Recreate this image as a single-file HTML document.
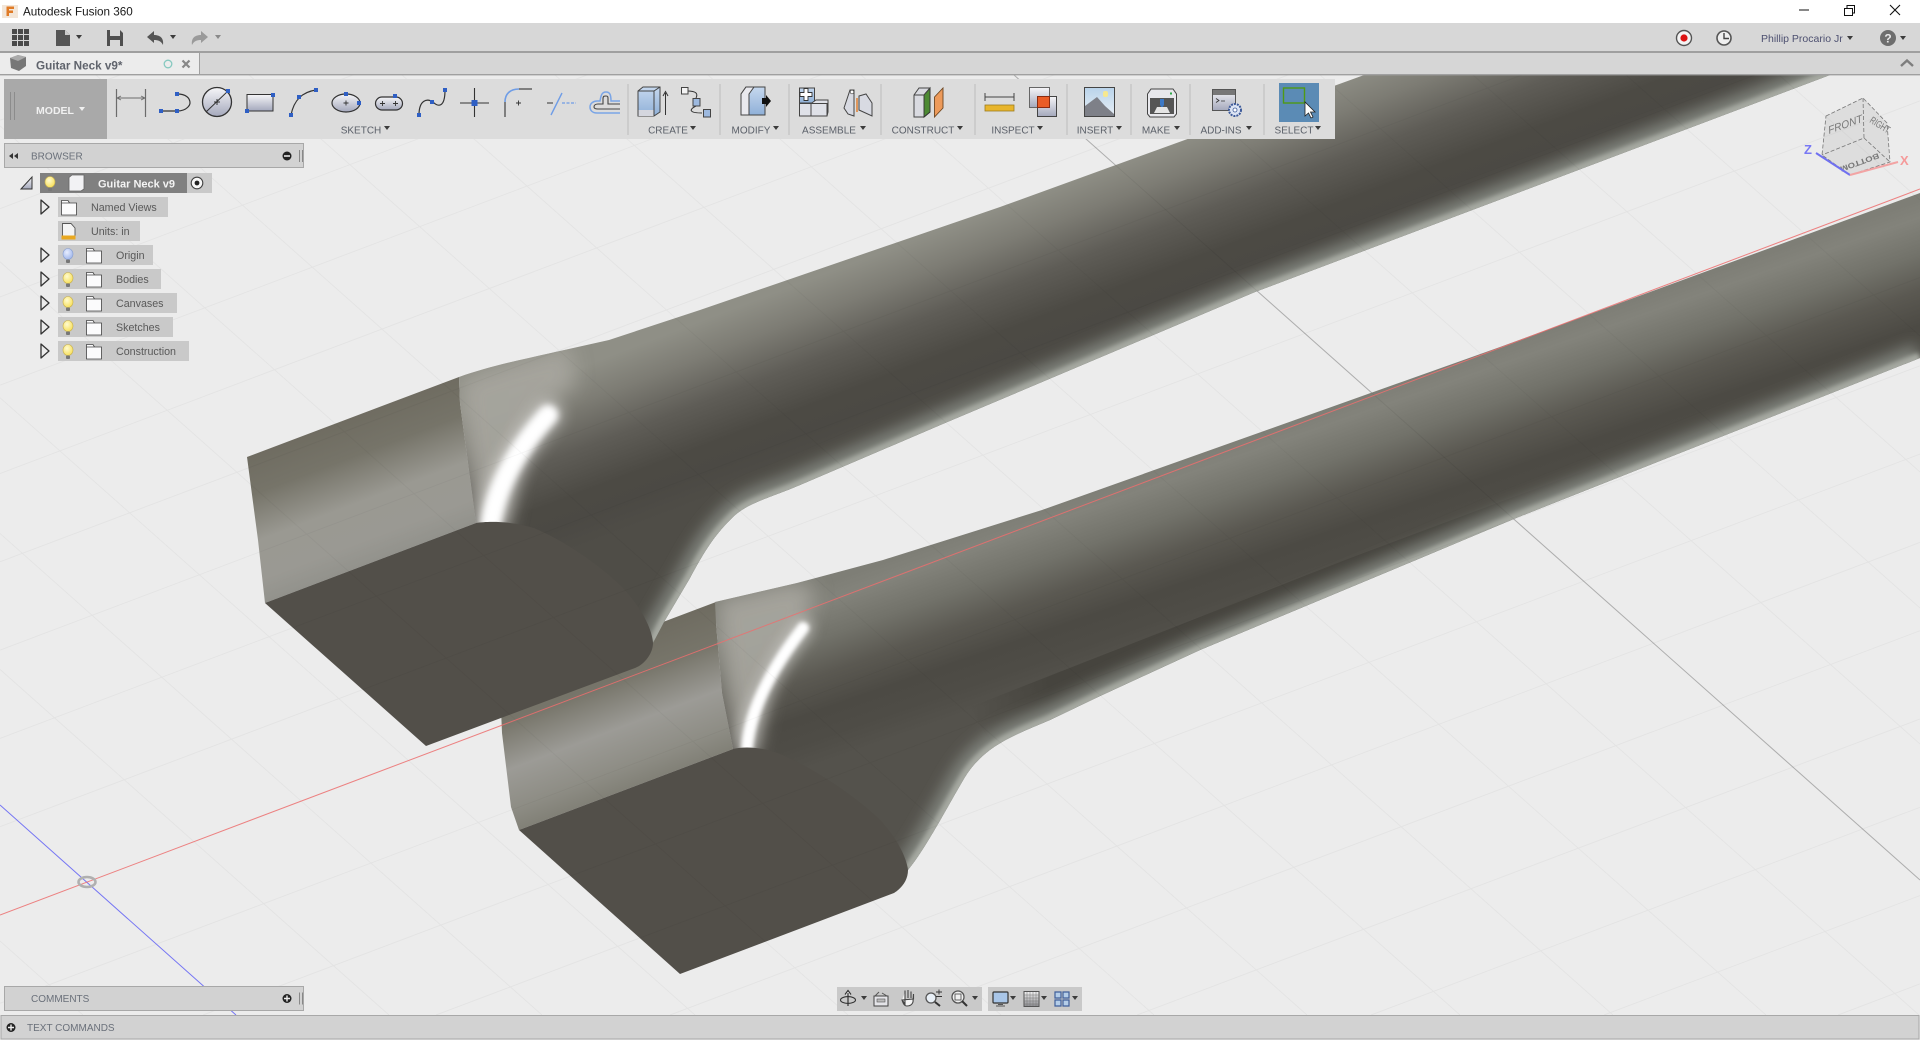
<!DOCTYPE html>
<html><head><meta charset="utf-8"><title>Autodesk Fusion 360</title>
<style>
html,body{margin:0;padding:0;width:1920px;height:1040px;overflow:hidden;background:#ececec}
svg{display:block}
text{font-family:"Liberation Sans",sans-serif}
.lb{font-size:10px;fill:#5a5f68;text-anchor:middle}
.tr{font-size:10.7px;fill:#595959}
.pn{font-size:10px;fill:#6a707a}
</style></head><body>
<svg width="1920" height="1040" viewBox="0 0 1920 1040" xmlns="http://www.w3.org/2000/svg">
<defs>
<filter id="b2" filterUnits="userSpaceOnUse" x="0" y="0" width="1920" height="1040"><feGaussianBlur stdDeviation="2"/></filter>
<filter id="b3" filterUnits="userSpaceOnUse" x="0" y="0" width="1920" height="1040"><feGaussianBlur stdDeviation="3.5"/></filter>
<filter id="b6" filterUnits="userSpaceOnUse" x="0" y="0" width="1920" height="1040"><feGaussianBlur stdDeviation="6"/></filter>
<filter id="b7" filterUnits="userSpaceOnUse" x="0" y="0" width="1920" height="1040"><feGaussianBlur stdDeviation="7"/></filter>
<filter id="b10" filterUnits="userSpaceOnUse" x="0" y="0" width="1920" height="1040"><feGaussianBlur stdDeviation="10"/></filter>
<linearGradient id="gA" gradientUnits="userSpaceOnUse" x1="1000" y1="207" x2="1060" y2="364">
<stop offset="0" stop-color="#8f8f86"/><stop offset=".2" stop-color="#7d7c74"/><stop offset=".45" stop-color="#5f5d57"/><stop offset=".7" stop-color="#4c4a44"/><stop offset=".85" stop-color="#4b4944"/><stop offset="1" stop-color="#4f4d47"/></linearGradient>
<linearGradient id="gB" gradientUnits="userSpaceOnUse" x1="1500" y1="347" x2="1556" y2="507">
<stop offset="0" stop-color="#7e7e76"/><stop offset=".1" stop-color="#83837b"/><stop offset=".3" stop-color="#72726a"/><stop offset=".5" stop-color="#5b5952"/><stop offset=".7" stop-color="#4c4a44"/><stop offset=".85" stop-color="#4e4c46"/><stop offset="1" stop-color="#54524c"/></linearGradient>
<linearGradient id="sA" gradientUnits="userSpaceOnUse" x1="247" y1="457" x2="300" y2="597">
<stop offset="0" stop-color="#6f6c61"/><stop offset=".25" stop-color="#767469"/><stop offset=".55" stop-color="#9a9992"/><stop offset=".8" stop-color="#9a9993"/><stop offset="1" stop-color="#90908a"/></linearGradient>
<linearGradient id="sB" gradientUnits="userSpaceOnUse" x1="503" y1="684" x2="556" y2="824">
<stop offset="0" stop-color="#6f6c61"/><stop offset=".25" stop-color="#77756a"/><stop offset=".55" stop-color="#9c9b96"/><stop offset=".8" stop-color="#8e8d85"/><stop offset="1" stop-color="#7d7c72"/></linearGradient>
<linearGradient id="cr" gradientUnits="userSpaceOnUse" x1="970" y1="0" x2="1640" y2="0">
<stop offset="0" stop-color="#46443e" stop-opacity="0"/><stop offset=".12" stop-color="#46443e"/><stop offset=".7" stop-color="#46443e"/><stop offset="1" stop-color="#46443e" stop-opacity="0"/></linearGradient>
<clipPath id="cA"><path d="M459,377C490,366 520,360 551,353L609,340L700,310L1000,207L1400,62L1865,62L1830,75L1255,292L945,423L800,485C770,498 745,503 730,520C715,535 705,550 690,578L664,622L653,643L646,660L476,523L460,403Z"/></clipPath>
<clipPath id="cB"><path d="M715,602L797,583L883,560L1042,510L1500,347L1920,193L1920,358L1516,518L1416,560L1200,650L1098,697L1050,720C1015,735 985,745 965,777C950,802 925,850 908,870L902,883L733,749L722,693L716,623Z"/></clipPath>
<clipPath id="vp"><rect x="0" y="75" width="1920" height="940"/></clipPath>
<linearGradient id="ic" x1="0" y1="0" x2="0" y2="1"><stop offset="0" stop-color="#f6f6f8"/><stop offset="1" stop-color="#a4a8bc"/></linearGradient>
<linearGradient id="bl" x1="0" y1="0" x2="0" y2="1"><stop offset="0" stop-color="#c6d8ee"/><stop offset="1" stop-color="#8fb0d8"/></linearGradient>
<linearGradient id="sky" x1="0" y1="0" x2="0" y2="1"><stop offset="0" stop-color="#b9d3ea"/><stop offset="1" stop-color="#e8eff6"/></linearGradient>
<linearGradient id="grd" x1="0" y1="0" x2="0" y2="1"><stop offset="0" stop-color="#f4f4f4"/><stop offset="1" stop-color="#8c8c90"/></linearGradient>
<radialGradient id="bulb" cx=".4" cy=".35" r=".75"><stop offset="0" stop-color="#fffbd0"/><stop offset="1" stop-color="#f6dc4c"/></radialGradient>
<radialGradient id="bulbB" cx=".4" cy=".35" r=".7"><stop offset="0" stop-color="#e8eeff"/><stop offset="1" stop-color="#9db4ea"/></radialGradient>
<polygon id="dd" points="-3,-2 3,-2 0,2" fill="#3c3c3c"/>
<g id="fold"><path d="M0.5,3.5H15.5V15.5H0.5ZM0.5,3.5V1H7L8.5,3.5" fill="#fbfbfc" stroke="#444" stroke-width=".8"/></g>
<g id="exp"><path d="M1,0L9,7L1,14Z" fill="none" stroke="#333" stroke-width="1.3" stroke-linejoin="round"/></g>
<g id="blb"><ellipse cx="0" cy="-2" rx="5" ry="5.5" fill="url(#bulb)" stroke="#c8b050" stroke-width=".6"/><rect x="-2" y="3.5" width="4" height="3.5" rx="1" fill="#777"/></g>
<rect id="sq" x="-2" y="-2" width="4" height="4" fill="#2f5fc4"/>
<path id="gridp" fill="none" stroke="#000" stroke-width="1" d="M0,941L83,1015M0,669.4L389,1015M0,533.5L542,1015M0,397.7L695,1015M0,261.8L848,1015M0,125.9L1001,1015M96,75L1154,1015M249,75L1307,1015M402,75L1460,1015M555,75L1613,1015M708,75L1766,1015M861,75L1919,1015M1167,75L1920,744M1320,75L1920,608M1473,75L1920,472M1626,75L1920,336M1779,75L1920,200
M0,120.3L120,75M0,208.6L353,75M0,296.9L587,75M0,385.2L821,75M0,473.5L1054,75M0,561.8L1288,75M0,650.1L1522,75M0,738.4L1755,75M0,826.7L1920,100.9M0,1003.3L1920,277.5M203,1015L1920,365.8M436,1015L1920,454.1M670,1015L1920,542.4M903,1015L1920,630.7M1137,1015L1920,719M1371,1015L1920,807.3M1604,1015L1920,895.6M1838,1015L1920,983.9"/>
</defs>

<rect x="0" y="75" width="1920" height="940" fill="#ececec"/>
<use href="#gridp" stroke-opacity=".075" opacity=".075"/>
<path d="M1014,75L1920,880" fill="none" stroke="#000" stroke-opacity=".22" stroke-width="1"/>

<!-- neck B -->
<polygon points="500,684 663,622 716,602 716,623 722,693 733,749 519,830 511,807 502,733" fill="url(#sB)"/>
<g clip-path="url(#cB)">
<rect x="600" y="190" width="1320" height="800" fill="url(#gB)"/>
<polygon points="716,600 790,582 815,585 805,630 770,680 755,752 733,752" fill="#a7a69f" filter="url(#b10)" opacity=".92"/>
<path d="M747,748Q751,695 803,628" fill="none" stroke="#fff" stroke-width="20" stroke-linecap="round" filter="url(#b6)" opacity=".35"/>
<path d="M747,748Q751,695 803,628" fill="none" stroke="#fff" stroke-width="12" stroke-linecap="round" filter="url(#b2)"/>
<path d="M970,707L1200,617L1345,560L1500,502L1640,450L1600,490L1516,518L1416,560L1200,650L1098,697L1016,730L990,742Z" fill="url(#cr)"/>
<path d="M1920,358L1516,518L1416,560L1200,650L1098,697L1050,720C1015,735 985,745 965,777C950,802 925,850 908,870" fill="none" stroke="#7e817a" stroke-width="30" filter="url(#b7)"/>
<path d="M1920,358L1516,518L1416,560L1200,650L1098,697L1050,720C1015,735 985,745 965,777C950,802 925,850 908,870" fill="none" stroke="#a6a9a1" stroke-width="11" filter="url(#b2)"/>
</g>
<path d="M733,749C745,746 765,747 785,756C820,772 860,800 880,820C895,836 906,855 908,870C908,880 902,888 894,893L680,974L519,830Z" fill="#524f49"/>

<!-- neck A -->
<polygon points="247,457 459,377 460,403 476,523 265,603 258,540" fill="url(#sA)"/>
<g clip-path="url(#cA)">
<rect x="400" y="75" width="1520" height="687" fill="url(#gA)"/>
<polygon points="460,380 500,366 570,345 575,385 545,405 520,450 507,528 476,528" fill="#a7a69f" filter="url(#b10)" opacity=".92"/>
<path d="M490,528Q498,470 548,415" fill="none" stroke="#fff" stroke-width="30" stroke-linecap="round" filter="url(#b7)" opacity=".4"/>
<path d="M490,528Q498,470 548,415" fill="none" stroke="#fff" stroke-width="20" stroke-linecap="round" filter="url(#b3)"/>
<path d="M1865,62L1830,75L1255,292L945,423L800,485C770,498 745,503 730,520C715,535 705,550 690,578L664,622L653,643" fill="none" stroke="#7e817a" stroke-width="30" filter="url(#b7)"/>
<path d="M1865,62L1830,75L1255,292L945,423L800,485C770,498 745,503 730,520C715,535 705,550 690,578L664,622L653,643" fill="none" stroke="#a6a9a1" stroke-width="11" filter="url(#b2)"/>
</g>
<path d="M476,523C488,521 512,521 534,528C565,541 600,565 623,588C640,606 652,628 653,643C653,653 645,664 635,668L426,746L265,603Z" fill="#524f49"/>

<!-- grid over body -->
<use href="#gridp" opacity=".03"/>
<path d="M1014,75L1920,880" fill="none" stroke="#000" stroke-opacity=".06" stroke-width="1"/>
<path d="M0,805L236,1015" fill="none" stroke="#7474f4" stroke-width="1"/>
<path d="M0,915L1920,189" fill="none" stroke="#ec6f6f" stroke-opacity=".85" stroke-width="1"/>
<ellipse cx="87" cy="882" rx="8.5" ry="5" fill="none" stroke="#b0b0b0" stroke-width="2.6"/>

<!-- view cube -->
<path d="M1826,116L1863,98L1887,123L1890,162L1850,175L1822,155Z" fill="#a8a8a8" fill-opacity=".22"/>
<path d="M1826,116L1863,98L1887,123L1890,162L1850,175L1822,155ZM1863,98L1864,138L1822,155M1864,138L1890,162" fill="none" stroke="#777" stroke-width=".8" stroke-dasharray="4 2"/>
<text transform="translate(1829,134) rotate(-20) skewX(-8)" font-size="10.5" font-style="italic" fill="#777">FRONT</text>
<text transform="translate(1869,122) rotate(32) scale(.7,1)" font-size="10" fill="#777">RIGHT</text>
<text transform="translate(1878,153) rotate(160) scale(1,.8)" font-size="9.5" fill="#777" font-weight="bold">BOTTOM</text>
<path d="M1816,153L1850,175" stroke="#7070f0" stroke-width="2"/>
<path d="M1850,175L1898,162" stroke="#f2a4a4" stroke-width="2"/>
<text x="1804" y="154" font-size="13" fill="#7878f4" font-weight="bold">Z</text>
<text x="1900" y="165" font-size="13" fill="#f59a9a" font-weight="bold">X</text>

<!-- title bar -->
<rect x="0" y="0" width="1920" height="23" fill="#fff"/>
<rect x="2" y="5" width="16" height="13" fill="#f3e6d8"/>
<path d="M6.5,16V6.5H14V9H9V10.5H13V13H9V16Z" fill="#e07b26"/>
<text x="23" y="15.5" font-size="11.7" fill="#1a1a1a">Autodesk Fusion 360</text>
<path d="M1799,10H1809" stroke="#111" stroke-width="1"/>
<path d="M1844.5,8.5H1852.5V15.5H1844.5ZM1847,8V5.5H1854.5V13H1853" fill="none" stroke="#111" stroke-width="1"/>
<path d="M1890,5L1900,15M1900,5L1890,15" stroke="#111" stroke-width="1.1"/>

<!-- quick access row -->
<rect x="0" y="23" width="1920" height="28" fill="#d7d7d7"/>
<rect x="0" y="51" width="1920" height="2" fill="#9f9f9f"/>
<path d="M12,29h5v5h-5zM18,29h5v5h-5zM24,29h5v5h-5zM12,35h5v5h-5zM18,35h5v5h-5zM24,35h5v5h-5zM12,41h5v5h-5zM18,41h5v5h-5zM24,41h5v5h-5z" fill="#4a4a4a"/>
<path d="M56,30H65L70,35V46H56Z" fill="#555"/><path d="M65,30V35H70Z" fill="#ccc"/>
<use href="#dd" x="79" y="37"/>
<path d="M107,30H120L123,33V46H107Z" fill="#4f4f4f"/><rect x="110" y="30" width="10" height="6" fill="#d7d7d7"/><rect x="110" y="40" width="10" height="6" fill="#d7d7d7"/>
<path d="M147,37L154,31V35C160,35 164,38 163,45C161,41 158,40 154,40V43Z" fill="#555"/>
<use href="#dd" x="173" y="37"/>
<path d="M208,37L201,31V35C195,35 191,38 192,45C194,41 197,40 201,40V43Z" fill="#9a9a9a"/>
<use href="#dd" x="218" y="37" opacity=".5"/>
<circle cx="1684" cy="38" r="7.5" fill="#f4f4f4" stroke="#555" stroke-width="1.4"/><circle cx="1684" cy="38" r="3.6" fill="#dd1414"/>
<circle cx="1724" cy="38" r="7" fill="#efefef" stroke="#555" stroke-width="1.6"/><path d="M1724,33V38.5H1729" fill="none" stroke="#444" stroke-width="1.4"/>
<text x="1761" y="42" font-size="10.5" fill="#4d5070">Phillip Procario Jr</text>
<use href="#dd" x="1850" y="38"/>
<circle cx="1888" cy="38" r="8" fill="#6e6e6e"/><text x="1888" y="42.5" font-size="12" font-weight="bold" fill="#e8e8e8" text-anchor="middle">?</text>
<use href="#dd" x="1903" y="38"/>

<!-- tabs row -->
<rect x="0" y="53" width="1920" height="21" fill="#d6d6d6"/>
<rect x="0" y="53" width="199" height="21" fill="#ececec"/>
<rect x="199" y="53" width="1" height="21" fill="#a0a0a0"/>
<rect x="0" y="74" width="1920" height="1.4" fill="#a0a0a0"/>
<path d="M10,58L18,55L26,57V66L19,71L11,68Z" fill="#777"/><path d="M10,58L18,61L26,57L18,55Z" fill="#aaa"/>
<text x="36" y="69.5" font-size="11.7" font-weight="bold" fill="#5f636c">Guitar Neck v9*</text>
<circle cx="168" cy="64" r="3.8" fill="none" stroke="#86c9c0" stroke-width="1.3"/>
<path d="M182.5,60.5L189.5,67.5M189.5,60.5L182.5,67.5" stroke="#888" stroke-width="2.2"/>
<path d="M1901,66L1907,60.5L1913,66" fill="none" stroke="#7e7e7e" stroke-width="2.4"/>

<!-- toolbar -->
<rect x="4" y="79" width="1331" height="60" fill="#dcdcdc"/>
<rect x="4" y="79" width="103" height="60" fill="#a9a9a9"/>
<path d="M10.5,92V120M14.5,92V120" stroke="#8c8c8c" stroke-width="1"/>
<text x="55" y="114" font-size="10.5" font-weight="bold" fill="#f0f0f0" text-anchor="middle">MODEL</text>
<polygon points="79,107 85,107 82,111" fill="#f0f0f0"/>
<path d="M628,84V135M720,84V135M789,84V135M881,84V135M975,84V135M1067,84V135M1131,84V135M1190,84V135M1264,84V135" stroke="#c2c2c2" stroke-width="1.2"/>

<!-- sketch icons -->
<path d="M116.5,89V117M145.5,89V117" stroke="#6c6c6c" stroke-width="1.2"/>
<path d="M117,98H145M117,98L121,96M117,98L121,100M145,98L141,96M145,98L141,100" stroke="#6c6c6c" stroke-width=".9" fill="none"/>
<path d="M161,111H177C188,111 190,104 190,103C190,98 186,94 177,94" fill="none" stroke="#333" stroke-width="1.2"/>
<use href="#sq" x="161" y="111"/><use href="#sq" x="177" y="111"/><use href="#sq" x="177" y="94"/>
<circle cx="217" cy="102" r="14.5" fill="url(#ic)" stroke="#333" stroke-width="1.3"/>
<path d="M206,112L228,91M214,102H220M217,99V105" stroke="#333" stroke-width="1"/><use href="#sq" x="228" y="91"/>
<rect x="247" y="94.5" width="26" height="16.5" fill="url(#ic)" stroke="#333" stroke-width="1"/>
<use href="#sq" x="273" y="95"/><use href="#sq" x="247" y="111"/>
<path d="M291,115C294,100 302,92 316,90" fill="none" stroke="#333" stroke-width="1.2"/>
<use href="#sq" x="291" y="115"/><use href="#sq" x="316" y="90"/><use href="#sq" x="299" y="97"/>
<ellipse cx="346" cy="103" rx="14" ry="9" fill="url(#ic)" stroke="#333" stroke-width="1.2"/>
<path d="M343.5,103H348.5M346,100.5V105.5" stroke="#333" stroke-width=".9"/><use href="#sq" x="346" y="94"/><use href="#sq" x="359" y="103"/>
<rect x="375.5" y="97" width="27" height="13" rx="6.5" fill="url(#ic)" stroke="#333" stroke-width="1.2"/>
<path d="M380,103.5H385M382.5,101V106M393,103.5H398M395.5,101V106" stroke="#333" stroke-width=".9"/><use href="#sq" x="395" y="96"/>
<path d="M419,115C419,100 427,98 433,102C438,107 445,108 445,90" fill="none" stroke="#333" stroke-width="1.2"/>
<use href="#sq" x="419" y="115"/><use href="#sq" x="432" y="102"/><use href="#sq" x="445" y="90"/>
<path d="M460,103H489M474.5,88V117" stroke="#333" stroke-width="1.1"/><rect x="471.5" y="100" width="6" height="6" fill="#2f5fc4"/>
<path d="M519,89H532" stroke="#333" stroke-width="1.1"/><path d="M519,89C510,89 505,94 505,102" fill="none" stroke="#6f9de6" stroke-width="1.6"/>
<path d="M505,102V117" stroke="#333" stroke-width="1.1"/><path d="M516,103H521M518.5,100.5V105.5" stroke="#333" stroke-width=".9"/>
<path d="M547,103H553" stroke="#444" stroke-width="1.1"/><path d="M551,115L562,93" stroke="#6f9de6" stroke-width="1.4"/><path d="M562,103H576" stroke="#6f9de6" stroke-width="1.2" stroke-dasharray="3 1.5"/>
<path d="M620,113H597C592,113 590,110 590,107C590,103 594,101 597,101H600C601,95 602,92 606,92C610,92 611,95 611,101H620" fill="none" stroke="#7aa5e6" stroke-width="1.5"/>
<path d="M620,109H598C595,109 594,108 594,107C594,105 596,104 598,104H603V99C603,96 604,96 606,96C608,96 608,97 608,99V104H620" fill="none" stroke="#444" stroke-width="1.1"/>
<text class="lb" x="361" y="133.5">SKETCH</text><use href="#dd" x="387" y="128"/>

<!-- create -->
<path d="M638,91L643,87H660V112L654,116H638Z" fill="url(#bl)" stroke="#444" stroke-width="1"/>
<path d="M638,91H654L660,87M654,91V116" fill="none" stroke="#444" stroke-width="1"/>
<rect x="638.5" y="110" width="15" height="6" fill="#d4d6de"/>
<path d="M665.5,115V93M663,96L665.5,91.5L668,96" fill="none" stroke="#333" stroke-width="1"/>
<path d="M687,91C697,91 698,94 696,98M696,106C688,110 690,113 702,113" fill="none" stroke="#333" stroke-width="1"/>
<rect x="681.5" y="87.5" width="6.5" height="6.5" fill="#f4f4f4" stroke="#444"/><rect x="693" y="98.5" width="7" height="7.5" fill="#9db9df" stroke="#444"/><rect x="703.5" y="109.5" width="7" height="7.5" fill="#9db9df" stroke="#444"/>
<text class="lb" x="668" y="133.5">CREATE</text><use href="#dd" x="693" y="128"/>
<!-- modify -->
<path d="M741,115V94L746,87H765V115Z" fill="url(#bl)" stroke="#444"/><path d="M741,115V94L746,87H754L749,94V115Z" fill="#e9e9ee" stroke="#444"/>
<path d="M762,98H766V95L771,101L766,107V104H762Z" fill="#111"/>
<text class="lb" x="751" y="133.5">MODIFY</text><use href="#dd" x="776" y="128"/>
<!-- assemble -->
<rect x="799.5" y="88" width="15" height="15" fill="url(#bl)" stroke="#444"/><path d="M804,88.5h4v4h4v4h-4v4h-4v-4h-4v-4h4z" fill="#fff" stroke="#333" stroke-width=".9"/>
<path d="M799.5,103.5H811V116H799.5ZM811,103.5H827V116H811ZM811,103.5L816,100H828V112L827,116" fill="#dfe1e8" stroke="#444"/>
<path d="M844,108L850,90H854V116L848,114ZM859,96L866,94L872,103V116L859,110Z" fill="#d8dae2" stroke="#444"/>
<path d="M857,98V112" stroke="#e07826" stroke-width="1.4"/><circle cx="852" cy="92" r="1.8" fill="#fff" stroke="#444" stroke-width=".7"/>
<text class="lb" x="829" y="133.5">ASSEMBLE</text><use href="#dd" x="863" y="128"/>
<!-- construct -->
<path d="M914,117V95L919,88H930V112L924,117Z" fill="#d9dae0" stroke="#444"/><path d="M924,117V95L930,88V112Z" fill="#4d8a34" stroke="#333" stroke-width=".9"/><path d="M914,95H924L930,88" fill="none" stroke="#444"/>
<path d="M934.5,117V97L943,88V108Z" fill="#ed9a5a" stroke="#6e4620" stroke-width=".9"/>
<text class="lb" x="923" y="133.5">CONSTRUCT</text><use href="#dd" x="960" y="128"/>
<!-- inspect -->
<path d="M985,93V101M1014,93V101M985,97H1014" stroke="#444" stroke-width="1"/>
<rect x="985" y="105" width="29" height="6" fill="#e8b52c" stroke="#9c7c20" stroke-width=".8"/>
<rect x="1029.5" y="87.5" width="20" height="20" fill="url(#ic)" stroke="#666"/><rect x="1037.5" y="96.5" width="19" height="20" fill="url(#ic)" stroke="#444"/><rect x="1037.5" y="96.5" width="12" height="11" fill="#ea5c26" stroke="#8a2a10"/>
<text class="lb" x="1013" y="133.5">INSPECT</text><use href="#dd" x="1040" y="128"/>
<!-- insert -->
<rect x="1084.5" y="87.5" width="30" height="29" fill="url(#sky)" stroke="#444"/>
<rect x="1103" y="91" width="5" height="6" rx="2" fill="#f6e890"/>
<path d="M1085,116V106L1097,97L1105,106L1114,114V116Z" fill="#7e8088"/>
<text class="lb" x="1095" y="133.5">INSERT</text><use href="#dd" x="1119" y="128"/>
<!-- make -->
<path d="M1147.5,94L1151,89H1173L1176.5,94V114L1174,117H1150L1147.5,114Z" fill="#e8e8ec" stroke="#444"/>
<rect x="1150" y="98" width="24" height="16" fill="#555"/><path d="M1160,99H1164V105L1162,108L1160,105Z" fill="#3d79c6"/>
<path d="M1154,113L1157,107H1167L1170,113Z" fill="#e4e4e4"/><rect x="1170" y="92.5" width="2" height="2" fill="#2ea84a"/>
<text class="lb" x="1156" y="133.5">MAKE</text><use href="#dd" x="1177" y="128"/>
<!-- add-ins -->
<rect x="1212.5" y="89.5" width="23" height="21" fill="url(#ic)" stroke="#555"/><rect x="1213" y="90" width="22" height="5" fill="#777"/>
<path d="M1216,98.5L1219,100.5L1216,102.5M1221,101H1225" fill="none" stroke="#333" stroke-width=".8"/>
<circle cx="1235" cy="110" r="6" fill="#dce4f4" stroke="#3d5a9a" stroke-width="2" stroke-dasharray="2 1"/><circle cx="1235" cy="110" r="2" fill="#fff" stroke="#3d5a9a" stroke-width=".8"/>
<text class="lb" x="1221" y="133.5">ADD-INS</text><use href="#dd" x="1249" y="128"/>
<!-- select -->
<rect x="1279" y="83" width="40" height="39" fill="#5b8bb5"/>
<rect x="1283.5" y="88" width="21" height="15" fill="none" stroke="#4f9a14" stroke-width="1.4"/>
<path d="M1305,102V116L1308.5,113L1311,118L1313,117L1310.5,112L1315,112Z" fill="#fff" stroke="#222" stroke-width=".8"/>
<text class="lb" x="1294" y="133.5">SELECT</text><use href="#dd" x="1318" y="128"/>

<!-- browser -->
<rect x="4.5" y="143.5" width="299" height="24" fill="#d2d2d2" stroke="#a8a8a8"/>
<path d="M9,156L13,153V159ZM14,156L18,153V159Z" fill="#333"/>
<text class="pn" x="31" y="159.5">BROWSER</text>
<circle cx="287" cy="156" r="4.5" fill="#222"/><rect x="284" y="155.2" width="6" height="1.6" fill="#e8e8e8"/>
<path d="M299.5,150V162M302.5,150V162" stroke="#888" stroke-width="1"/>

<path d="M21,189L32,177V189Z" fill="url(#ic)" stroke="#333" stroke-width="1"/>
<rect x="40" y="173" width="172" height="20" fill="#c9c9c9"/><rect x="40" y="173" width="147" height="20" fill="#808080"/>
<use href="#blb" x="50" y="184"/>
<path d="M69,177.5L72,175H84V189L81,191H69Z" fill="#f2f2f4" stroke="#666" stroke-width=".8"/>
<text x="98" y="187.5" font-size="11" font-weight="bold" fill="#f4f4f4">Guitar Neck v9</text>
<circle cx="197" cy="183" r="5.8" fill="#f8f8f8" stroke="#444" stroke-width="1.1"/><circle cx="197" cy="183" r="2.4" fill="#222"/>

<use href="#exp" x="40" y="200"/>
<rect x="58" y="197" width="110" height="20" fill="#c9c9c9"/>
<use href="#fold" x="61" y="199.5"/>
<text class="tr" x="91" y="211">Named Views</text>

<rect x="58" y="221" width="82" height="20" fill="#c9c9c9"/>
<path d="M62.5,239V223.5H71L75,228V239" fill="#f4f4f4" stroke="#555" stroke-width=".9"/>
<rect x="61.5" y="235.5" width="14" height="4" fill="#e9a820"/>
<text class="tr" x="91" y="235">Units: in</text>

<use href="#exp" x="40" y="248"/>
<rect x="58" y="245" width="95" height="20" fill="#c9c9c9"/>
<g transform="translate(68,256)"><ellipse cx="0" cy="-2" rx="5" ry="5.5" fill="url(#bulbB)" stroke="#8aa0d0" stroke-width=".6"/><rect x="-2" y="3.5" width="4" height="3.5" rx="1" fill="#777"/></g>
<use href="#fold" x="86" y="247.5"/>
<text class="tr" x="116" y="259">Origin</text>

<use href="#exp" x="40" y="272"/>
<rect x="58" y="269" width="103" height="20" fill="#c9c9c9"/>
<use href="#blb" x="68" y="280"/><use href="#fold" x="86" y="271.5"/>
<text class="tr" x="116" y="283">Bodies</text>

<use href="#exp" x="40" y="296"/>
<rect x="58" y="293" width="119" height="20" fill="#c9c9c9"/>
<use href="#blb" x="68" y="304"/><use href="#fold" x="86" y="295.5"/>
<text class="tr" x="116" y="307">Canvases</text>

<use href="#exp" x="40" y="320"/>
<rect x="58" y="317" width="115" height="20" fill="#c9c9c9"/>
<use href="#blb" x="68" y="328"/><use href="#fold" x="86" y="319.5"/>
<text class="tr" x="116" y="331">Sketches</text>

<use href="#exp" x="40" y="344"/>
<rect x="58" y="341" width="131" height="20" fill="#c9c9c9"/>
<use href="#blb" x="68" y="352"/><use href="#fold" x="86" y="343.5"/>
<text class="tr" x="116" y="355">Construction</text>

<!-- comments -->
<rect x="4.5" y="986.5" width="299" height="24" fill="#d2d2d2" stroke="#a8a8a8"/>
<text class="pn" x="31" y="1002">COMMENTS</text>
<circle cx="287" cy="998.5" r="4.5" fill="#222"/><path d="M284,998.5H290M287,995.5V1001.5" stroke="#eee" stroke-width="1.4"/>
<path d="M299.5,992.5V1004.5M302.5,992.5V1004.5" stroke="#888" stroke-width="1"/>

<!-- nav bar -->
<rect x="837" y="987" width="145" height="24" fill="#c9c9c9"/>
<rect x="988" y="987" width="94" height="24" fill="#c9c9c9"/>
<path d="M848,1006V993M845,994.5L848,990.5L851,994.5" fill="#f4f4f4" stroke="#333" stroke-width="1.2"/>
<ellipse cx="848" cy="1000" rx="7.5" ry="3.4" fill="none" stroke="#333" stroke-width="1.1"/>
<use href="#dd" x="864" y="998"/>
<rect x="874" y="996" width="14" height="10" fill="#e4e4e8" stroke="#444"/><rect x="877" y="999" width="8" height="3" fill="#bbb" stroke="#555" stroke-width=".6"/><path d="M875,996L879,992M882,993L887,996" stroke="#555" stroke-width="1"/>
<path d="M902,1000L905,1004V992M905,998V990.5M908,998V990M911,998V991.5M913.5,999V994L913,1002C912,1005 910,1006 907,1006C904,1006 903,1003 902,1000Z" fill="#f4f4f4" stroke="#444" stroke-width="1.1"/>
<circle cx="931" cy="998" r="5" fill="#e8eff6" stroke="#555" stroke-width="1.3"/><path d="M935,1002L940,1006" stroke="#333" stroke-width="2"/><path d="M936,992H942M939,989.5V994.5M936,996.5H942" stroke="#333" stroke-width=".9"/>
<circle cx="958" cy="997" r="6" fill="#f0f0f0" stroke="#555" stroke-width="1.3"/><rect x="955" y="994" width="6" height="6" fill="none" stroke="#444" stroke-width=".8"/><path d="M962,1001L967,1006" stroke="#333" stroke-width="2"/>
<use href="#dd" x="975" y="998"/>
<rect x="993" y="992" width="15" height="11" rx="1" fill="#a9c6e8" stroke="#333" stroke-width="1.2"/><path d="M998,1004.5H1003M996,1006H1005" stroke="#555" stroke-width="1"/>
<use href="#dd" x="1013" y="998"/>
<rect x="1024" y="991.5" width="15" height="15" fill="url(#grd)" stroke="#555"/>
<path d="M1027,992V1006M1030,992V1006M1033,992V1006M1036,992V1006M1024,995H1039M1024,998H1039M1024,1001H1039M1024,1004H1039" stroke="#777" stroke-width=".5"/>
<use href="#dd" x="1044" y="998"/>
<path d="M1055,992H1061V998H1055ZM1063,992H1069V998H1063ZM1055,1000H1061V1006H1055ZM1063,1000H1069V1006H1063Z" fill="#b4cde8" stroke="#3f5f9a" stroke-width="1.2"/>
<use href="#dd" x="1075" y="998"/>

<!-- text commands -->
<rect x="1" y="1015.5" width="1918" height="23.5" fill="#d2d2d2" stroke="#a8a8a8"/>
<circle cx="11" cy="1027.5" r="4.5" fill="#222"/><path d="M8,1027.5H14M11,1024.5V1030.5" stroke="#eee" stroke-width="1.4"/>
<text class="pn" x="27" y="1031">TEXT COMMANDS</text>
</svg>
</body></html>
